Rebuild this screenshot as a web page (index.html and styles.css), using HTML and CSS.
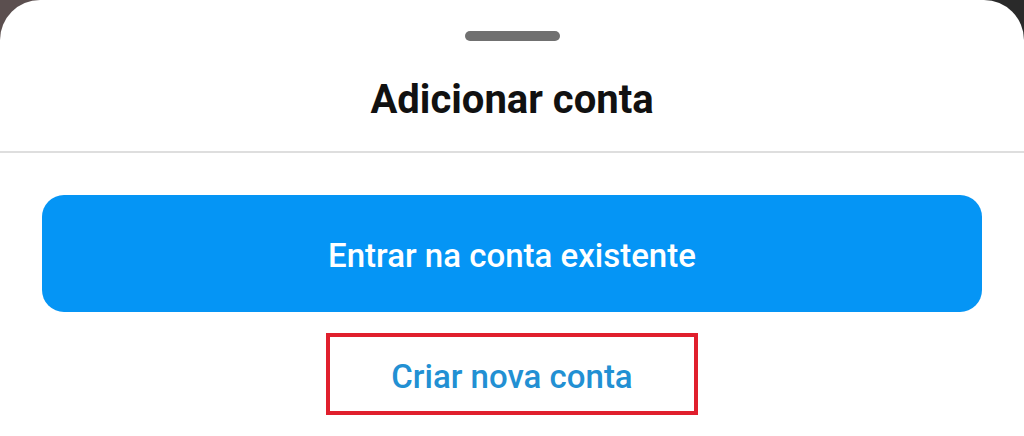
FILE: index.html
```html
<!DOCTYPE html>
<html lang="pt">
<head>
<meta charset="utf-8">
<title>Adicionar conta</title>
<link rel="stylesheet" href="styles.css">
</head>
<body>
<div class="sheet">
  <header class="sheet-header">
    <div class="handle"></div>
    <h1 class="title">Adicionar conta</h1>
  </header>
  <main class="sheet-body">
    <button class="primary-btn">Entrar na conta existente</button>
    <div class="secondary-wrap">
      <button class="link-btn">Criar nova conta</button>
    </div>
  </main>
</div>
</body>
</html>
```

FILE: styles.css
```css
html, body {
  margin: 0;
  padding: 0;
  height: 100%;
}
body {
  background: linear-gradient(to right, #5b4f4f 0%, #5b4f4f 50%, #2a2a2a 50%, #2a2a2a 100%);
  font-family: Roboto, "Liberation Sans", Arial, sans-serif;
  overflow: hidden;
}
.sheet {
  background: #ffffff;
  height: 100%;
  border-radius: 40px 40px 0 0;
  display: flex;
  flex-direction: column;
}
.sheet-header {
  display: flex;
  flex-direction: column;
  align-items: center;
  height: 153px;
  border-bottom: 2px solid #dedede;
  box-sizing: border-box;
  padding-top: 31px;
}
.handle {
  width: 95px;
  height: 10px;
  border-radius: 5px;
  background: #707070;
}
.title {
  margin: 35px 0 0;
  font-size: 40px;
  font-weight: 700;
  color: #111111;
  line-height: 48px;
}
.sheet-body {
  padding: 42px 42px 0;
  display: flex;
  flex-direction: column;
  align-items: center;
}
.primary-btn {
  width: 100%;
  height: 117px;
  border: none;
  border-radius: 22px;
  background: #0595f5;
  color: #ffffff;
  font-family: inherit;
  font-size: 33px;
  font-weight: 500;
  padding: 4px 0 0;
  cursor: pointer;
}
.secondary-wrap {
  margin-top: 21px;
  width: 372px;
  height: 82px;
  box-sizing: border-box;
  border: 4px solid #e01f2d;
  display: flex;
  align-items: center;
  justify-content: center;
  padding-top: 4px;
}
.link-btn {
  background: none;
  border: none;
  padding: 0;
  font-family: inherit;
  font-size: 33px;
  font-weight: 500;
  color: #2290d3;
  cursor: pointer;
}
```
